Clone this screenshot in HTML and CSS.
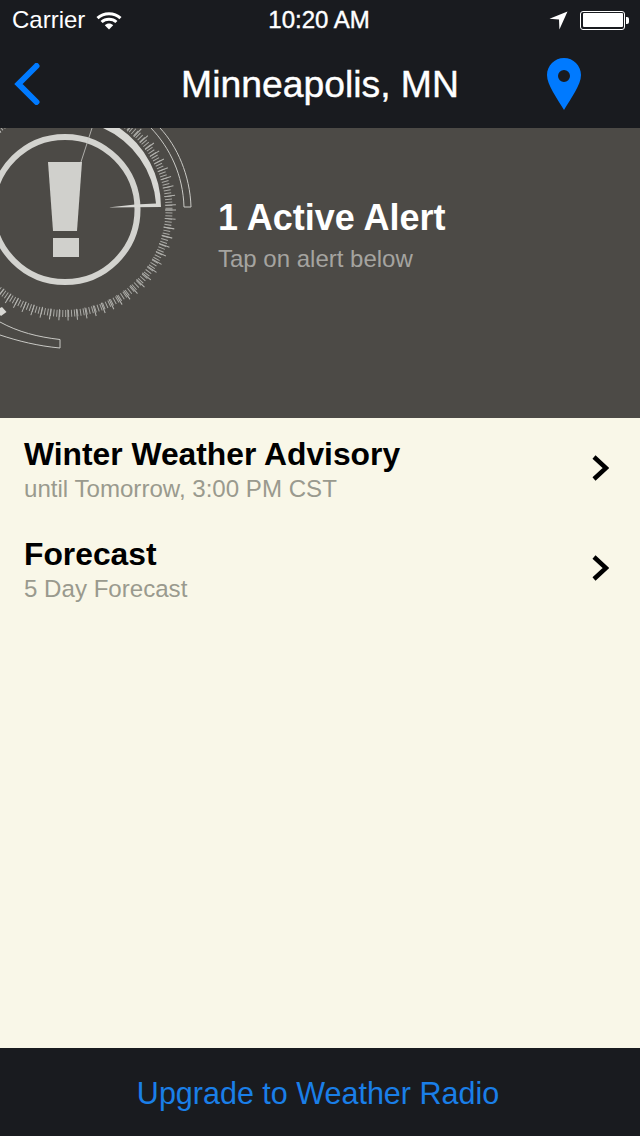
FILE: index.html
```html
<!DOCTYPE html>
<html lang="en">
<head>
<meta charset="utf-8">
<title>Minneapolis, MN</title>
<link rel="stylesheet" href="styles.css">
</head>
<body>
<div class="app">
  <header class="topbar">
    <div class="status">
      <div class="status-left">
        <span>Carrier</span>
        <svg class="wifi" width="26" height="19" viewBox="0 0 26 19">
          <path d="M1.5 7.2C7.8 1.2 18.2 1.2 24.5 7.2" class="wifi-arc"/>
          <path d="M5.6 11C9.6 7.2 16.4 7.2 20.4 11" class="wifi-arc"/>
          <path d="M13 18.5L8.8 14.2C11.2 12 14.8 12 17.2 14.2Z" class="wifi-dot"/>
        </svg>
      </div>
      <div class="clock">10:20 AM</div>
      <div class="status-right">
        <svg width="19" height="19" viewBox="0 0 19 19"><path d="M18.5 0.5L0.5 7.8L10 8.6L10.4 18.5Z" class="white"/></svg>
        <div class="battery"><div class="battery-fill"></div></div>
        <div class="battery-nub"></div>
      </div>
    </div>
    <nav class="nav">
      <svg class="back" width="26" height="42" viewBox="0 0 26 42"><path d="M22.5 3L4.5 21L22.5 39" class="back-line"/></svg>
      <h1 class="title">Minneapolis, MN</h1>
      <svg class="pin" width="34" height="52" viewBox="0 0 34 52"><path fill-rule="evenodd" d="M17 0C7.6 0 0 7.6 0 17C0 27 10 40 17 52C24 40 34 27 34 17C34 7.6 26.4 0 17 0ZM17 12A6 6 0 1 1 17 24A6 6 0 1 1 17 12Z" class="blue"/></svg>
    </nav>
  </header>

  <section class="hero">
    <svg class="gauge" width="218" height="290" viewBox="0 0 218 290">
      <circle cx="65" cy="81.5" r="104" class="ticks-short"/>
      <circle cx="65" cy="81.5" r="105.5" class="ticks-long"/>
      <circle cx="65" cy="81.5" r="72.5" class="ring"/>
      <path d="M119.5 0A96 96 0 0 1 161 79L108 79.5L135 76.5L156 75.5A90 90 0 0 0 103 0Z" class="solid"/>
      <path d="M92 0L80 37" class="hair"/>
      <path d="M151 0C170 20 183 47 184 79H191C190 47 177 18 160 0" class="outline"/>
      <path d="M0 194C18 204 38 209 60 211.5V220C38 218 18 213 0 207" class="outline"/>
      <path d="M2 179L6.5 184L1 188L0 187V180Z" class="solid"/>
      <path d="M48 34H82L77 103H53Z" class="mark"/>
      <path d="M53 110H79V129H53Z" class="mark"/>
    </svg>
    <div class="hero-text">
      <div class="hero-title">1 Active Alert</div>
      <div class="hero-sub">Tap on alert below</div>
    </div>
  </section>

  <main class="list">
    <div class="row">
      <div class="row-text">
        <div class="row-title">Winter Weather Advisory</div>
        <div class="row-sub">until Tomorrow, 3:00 PM CST</div>
      </div>
      <svg class="chev" width="17" height="26" viewBox="0 0 17 26"><path d="M2 2L14 13L2 24" class="chev-line"/></svg>
    </div>
    <div class="row">
      <div class="row-text">
        <div class="row-title">Forecast</div>
        <div class="row-sub">5 Day Forecast</div>
      </div>
      <svg class="chev" width="17" height="26" viewBox="0 0 17 26"><path d="M2 2L14 13L2 24" class="chev-line"/></svg>
    </div>
  </main>

  <footer class="footer">Upgrade to Weather Radio</footer>
</div>
</body>
</html>
```
FILE: styles.css
```css
* { box-sizing: border-box; }
html, body { margin: 0; padding: 0; }
body { font-family: "Liberation Sans", Arial, sans-serif; background: #f9f7e8; }
.app { width: 640px; height: 1136px; display: flex; flex-direction: column; overflow: hidden; }

.topbar { height: 128px; background: #191b1f; color: #fff; flex: none; }
.status { height: 40px; display: grid; grid-template-columns: 1fr auto 1fr; align-items: center; padding: 0 11px 0 12px; font-size: 24px; }
.status-left { display: flex; align-items: center; gap: 11px; }
.clock { font-weight: 400; margin-left: -3px; -webkit-text-stroke: 0.4px #fff; }
.status-right { display: flex; align-items: center; justify-content: flex-end; }
.white { fill: #fff; }
.wifi-arc { fill: none; stroke: #fff; stroke-width: 3; }
.wifi-dot { fill: #fff; }
.battery { width: 45px; height: 19px; margin-left: 12px; border: 1.5px solid #fff; border-radius: 3px; padding: 1.5px; }
.battery-fill { height: 100%; background: #fff; border-radius: 1px; }
.battery-nub { width: 3px; height: 7px; margin-left: 1px; background: #fff; border-radius: 0 2px 2px 0; }

.nav { height: 88px; display: grid; grid-template-columns: 1fr auto 1fr; align-items: center; padding: 0 14px; }
.back { justify-self: start; }
.back-line { fill: none; stroke: #007aff; stroke-width: 6; stroke-linecap: round; stroke-linejoin: miter; }
.title { margin: 0; font-size: 37.3px; font-weight: 400; line-height: 44px; -webkit-text-stroke: 0.4px #fff; }
.pin { justify-self: end; margin-right: 45px; }
.blue { fill: #007aff; }

.hero { height: 290px; background: #4c4a46; display: flex; flex: none; }
.gauge { flex: none; display: block; }
.ticks-short { fill: none; stroke: #aaaaa6; stroke-width: 7; stroke-dasharray: 1 2; }
.ticks-long { fill: none; stroke: #b4b4b0; stroke-width: 11; stroke-dasharray: 1 8; }
.ring { fill: none; stroke: #d3d3cf; stroke-width: 6; }
.solid { fill: #d8d8d4; }
.hair { stroke: #c9c9c5; stroke-width: 0.8; fill: none; }
.outline { fill: none; stroke: #c9c9c5; stroke-width: 1; }
.mark { fill: #d0d0cc; }
.hero-text { padding-top: 69px; }
.hero-title { font-size: 36px; font-weight: 700; line-height: 42px; color: #fff; }
.hero-sub { font-size: 24px; line-height: 40px; color: #a5a4a0; }

.list { flex: 1; background: #f9f7e8; }
.row { height: 100px; display: flex; align-items: center; justify-content: space-between; padding: 0 31px 0 24px; }
.row-text { margin-top: 6px; }
.row-title { font-size: 31.8px; font-weight: 700; line-height: 36px; color: #000; }
.row-sub { font-size: 24.1px; line-height: 34px; color: #9a9a8e; }
.chev-line { fill: none; stroke: #000; stroke-width: 4.5; }

.footer { height: 88px; flex: none; background: #191b1f; color: #1a7fe8; font-size: 30.5px; padding: 2px 4px 0 0; display: flex; align-items: center; justify-content: center; }
```
